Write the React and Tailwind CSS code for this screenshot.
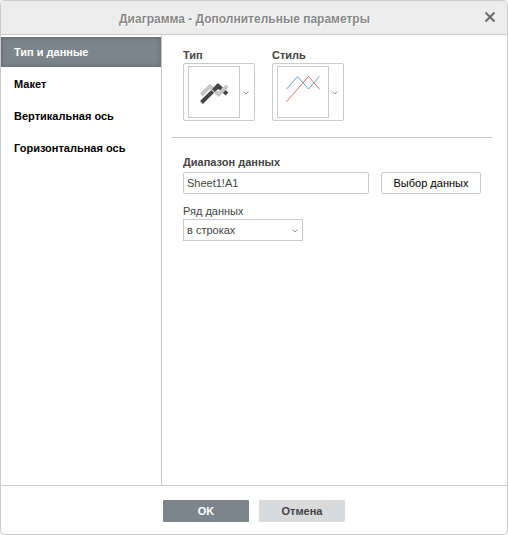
import React from "react";

const tabs = [
  { label: "Тип и данные", active: true },
  { label: "Макет" },
  { label: "Вертикальная ось" },
  { label: "Горизонтальная ось" },
];

function Chevron({ className }) {
  return (
    <svg className={className} width="6" height="4" viewBox="0 0 6 4" fill="none">
      <path d="M0.5 0.5L3 3L5.5 0.5" stroke="#777" strokeWidth="0.8" />
    </svg>
  );
}

function Picker({ label, children }) {
  return (
    <div className="flex w-[72px] flex-col">
      <div className="h-[15px] text-[11px] leading-[15px] font-bold text-[#444]">{label}</div>
      <button className="flex h-[58px] items-center rounded-[2px] border border-[#cbcbcb] bg-white pl-1">
        <span className="block h-[52px] w-[52px] border border-[#cbcbcb]">{children}</span>
        <Chevron className="ml-[3px] mt-0.5" />
      </button>
    </div>
  );
}

export default function App() {
  return (
    <div className="h-[535px] w-[508px] bg-[#f4f4f4] font-['Liberation_Sans',Arial,sans-serif] text-[11px] text-[#444]">
      <div className="flex h-full flex-col overflow-hidden rounded-[5px] border border-[#cbcbcb] bg-white">
        <header className="flex h-[34px] shrink-0 items-center border-b border-[#cbcbcb] bg-[#ededed] pr-[11px]">
          <div className="flex-1 pt-[3px] pl-[4px] text-center text-[12px] leading-[16px] font-bold text-[#888] [text-shadow:1px_1px_0_#fff]">
            Диаграмма - Дополнительные параметры
          </div>
          <svg className="mb-px" width="12" height="12" viewBox="0 0 12 12" stroke="#6b6b6b" strokeWidth="2">
            <path d="M1.5 1.5L10.5 10.5M10.5 1.5L1.5 10.5" />
          </svg>
        </header>

        <div className="flex h-[451px] shrink-0 border-b border-[#cbcbcb]">
          <nav className="flex w-[161px] shrink-0 flex-col gap-0.5 border-r border-[#cbcbcb] pt-0.5">
            {tabs.map((t) => (
              <div
                key={t.label}
                className={
                  "flex h-[30px] items-center pl-[13px] font-bold " +
                  (t.active
                    ? "bg-[#7d858c] text-white shadow-[inset_0_0_4px_1px_#646b73]"
                    : "text-black")
                }
              >
                {t.label}
              </div>
            ))}
          </nav>

          <main className="flex-1 pt-[13px] pr-[15px] pl-[10px]">
            <div className="flex gap-[17px] pl-[11px]">
              <Picker label="Тип">
                <svg width="50" height="50" viewBox="189 67 50 50" fill="none" strokeWidth="3.9">
                  <path d="M201.5 102.5L218 86L227 94" stroke="#444" />
                  <path d="M201.2 95L210 86.4L218.5 94.4L227.2 86" stroke="#c6c6c6" />
                  <path d="M213.5 90.5L218 86L220.8 88.5" stroke="#444" />
                </svg>
              </Picker>
              <Picker label="Стиль">
                <svg width="50" height="50" viewBox="278 67 50 50" fill="none" strokeWidth="1">
                  <path d="M286.5 89.2L297.5 76.5L308.5 89L319.5 76.2" stroke="#6f9cd3" />
                  <path d="M286.5 101.7L308.5 76.5L319.5 89.2" stroke="#dc706e" />
                </svg>
              </Picker>
            </div>

            <div className="mt-4 h-px bg-[#cbcbcb]" />

            <div className="pl-[11px]">
              <div className="mt-[17px] h-[17px] leading-[15px] font-bold">Диапазон данных</div>
              <div className="flex gap-3">
                <div className="flex h-[22px] w-[186px] items-center rounded-[2px] border border-[#cbcbcb] pl-[3px]">
                  Sheet1!A1
                </div>
                <button className="flex h-[22px] w-[100px] items-center justify-center rounded-[2px] border border-[#cbcbcb] text-black">
                  Выбор данных
                </button>
              </div>
              <div className="mt-[10px] h-[15px] leading-[15px]">Ряд данных</div>
              <div className="flex h-[22px] w-[120px] items-center justify-between border border-[#cbcbcb] pr-[4px] pl-[3px]">
                <span>в строках</span>
                <Chevron className="mt-0.5" />
              </div>
            </div>
          </main>
        </div>

        <footer className="flex justify-center gap-[10px] pt-[14px] font-bold">
          <button className="h-[22px] w-[86px] rounded-[1px] bg-[#7d858c] pt-px text-white">OK</button>
          <button className="h-[22px] w-[86px] rounded-[1px] bg-[#d8dadc] pt-px text-[#444]">Отмена</button>
        </footer>
      </div>
    </div>
  );
}
